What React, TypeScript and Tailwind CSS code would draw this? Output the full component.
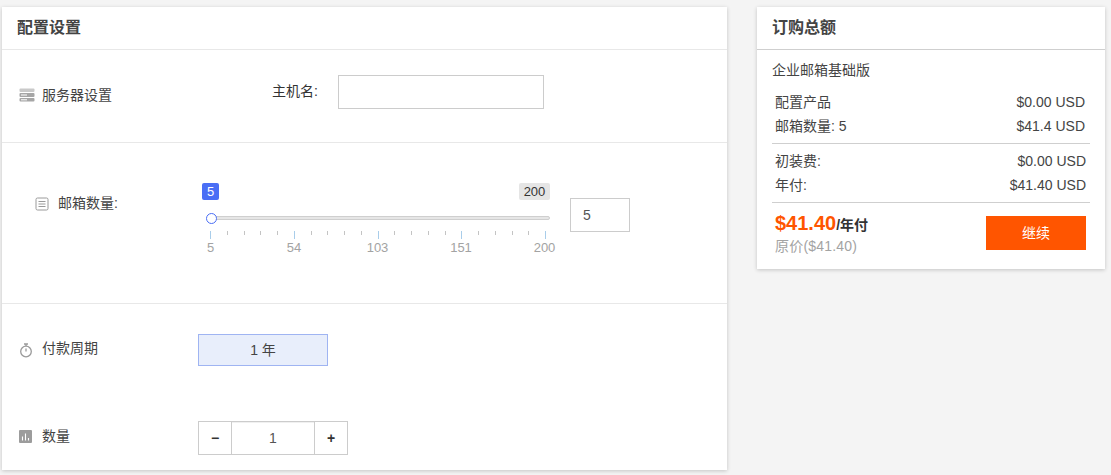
import React from 'react';

const font = { fontFamily: '"Liberation Sans", "Noto Sans CJK SC", sans-serif' };

const ServerIcon = () => (
  <svg width="16" height="14" viewBox="0 0 16 14" className="shrink-0">
    <rect x="0.5" y="0.5" width="15" height="3.5" rx="1" fill="#c9c9c9" />
    <rect x="0.5" y="5" width="15" height="4" rx="1" fill="#a6a6a6" />
    <rect x="0.5" y="10" width="15" height="3.5" rx="1" fill="#a6a6a6" />
    <rect x="2" y="6.5" width="6" height="1" fill="#fff" />
    <rect x="2" y="11.3" width="6" height="1" fill="#fff" />
  </svg>
);

const ListIcon = () => (
  <svg width="14" height="14" viewBox="0 0 14 14" fill="none" stroke="#9a9a9a" className="shrink-0">
    <rect x="1" y="1" width="12" height="12" rx="1.5" />
    <path d="M3.5 4.5h7M3.5 7h7M3.5 9.5h7" />
  </svg>
);

const TimerIcon = () => (
  <svg width="14" height="15" viewBox="0 0 14 15" fill="none" stroke="#9a9a9a" strokeWidth="1.3" className="shrink-0">
    <circle cx="7" cy="8.5" r="5.3" />
    <path d="M5 1h4M7 1v2M7 8.5V5.5" />
  </svg>
);

const ChartIcon = () => (
  <svg width="13" height="13" viewBox="0 0 13 13" className="shrink-0">
    <rect width="13" height="13" rx="1" fill="#9c9c9c" />
    <path d="M3.5 6.5v4M6.5 3.5v7M9.5 8v2.5" stroke="#fff" strokeWidth="1.1" />
  </svg>
);

const ticks = Array.from({ length: 21 }, (_, i) => i);
const marks = ['5', '54', '103', '151', '200'];

const Slider = () => (
  <div className="w-[348px] ml-[4px]">
    <div className="flex justify-between h-[17px] w-[348px]">
      <span className="w-[17px] h-[17px] rounded-[2px] bg-[#4a6ef5] text-white text-[13px] leading-[17px] text-center">5</span>
      <span className="w-[31px] h-[17px] rounded-[2px] bg-[#e5e5e5] text-[#333] text-[13px] leading-[17px] text-center">200</span>
    </div>
    <div className="relative mt-[16px] ml-[7px] w-[341px] h-[4px] rounded-full bg-[#e6e6e6] border border-[#cfcfcf]">
      <span className="absolute -left-[4.5px] -top-[4.5px] w-[11px] h-[11px] rounded-full bg-white border-[1.5px] border-[#4a6ef5]" />
    </div>
    <div className="flex justify-between ml-[8px] w-[336px] mt-[11px] items-start">
      {ticks.map((t) => (
        <span
          key={t}
          className={t % 5 === 0 ? 'w-px h-[8px] bg-[#a9cdea]' : 'w-px h-[4px] bg-[#c4c4c4]'}
        />
      ))}
    </div>
    <div className="flex justify-between ml-[8px] w-[335px] mt-px text-[13px] leading-[16px] text-[#a3a3a3]">
      {marks.map((m) => (
        <span key={m} className="w-px flex justify-center">
          {m}
        </span>
      ))}
    </div>
  </div>
);

const Row = ({ left, right }: { left: string; right: string }) => (
  <div className="flex justify-between h-6 items-center text-[14px] text-[#444]">
    <span>{left}</span>
    <span>{right}</span>
  </div>
);

export default function App() {
  return (
    <div style={font} className="w-[1111px] h-[475px] overflow-hidden bg-[#f4f4f4] flex items-start pt-[7px] pl-[2px]">
      {/* config card */}
      <div className="w-[725px] h-[463px] bg-white shadow-[0_1px_4px_rgba(0,0,0,0.2)] shrink-0">
        <div className="h-[43px] border-b border-[#e8e8e8] pl-[15px] flex items-center">
          <h2 className="text-[16px] font-bold text-[#444] leading-none">配置设置</h2>
        </div>
        <div className="h-[93px] border-b border-[#e8e8e8] flex items-center">
          <div className="w-[270px] pl-[17px] flex items-center gap-[7px] -mt-[2px]">
            <ServerIcon />
            <span className="text-[14px] text-[#444]">服务器设置</span>
          </div>
          <span className="text-[14px] text-[#333] w-[66px] -mt-[10px]">主机名:</span>
          <div className="w-[206px] h-[34px] border border-[#ccc] -mt-[8px]" />
        </div>
        <div className="h-[161px] border-b border-[#e8e8e8] flex items-start">
          <div className="w-[196px] pl-[33px] pt-[50px] flex items-center gap-[9px]">
            <ListIcon />
            <span className="text-[14px] text-[#444]">邮箱数量:</span>
          </div>
          <div className="pt-[40px]">
            <Slider />
          </div>
          <div className="mt-[55px] ml-[20px] w-[60px] h-[34px] border border-[#ccc] pl-[12px] text-[14px] leading-[32px] text-[#555]">5</div>
        </div>
        <div className="h-[159px] pt-[30px]">
          <div className="flex items-center h-[32px]">
            <div className="w-[196px] pl-[17px] flex items-center gap-[9px]">
              <TimerIcon />
              <span className="text-[14px] text-[#444] -mt-[3px]">付款周期</span>
            </div>
            <div className="w-[130px] h-[32px] bg-[#e8eefb] border border-[#9fb4f2] text-[14px] text-[#444] flex items-center justify-center">1 年</div>
          </div>
          <div className="flex items-center h-[34px] mt-[55px]">
            <div className="w-[196px] pl-[17px] flex items-center gap-[10px] -mt-[4px]">
              <ChartIcon />
              <span className="text-[14px] text-[#444]">数量</span>
            </div>
            <div className="w-[150px] h-[34px] border border-[#ccc] flex text-[#333]">
              <span className="w-[33px] border-r border-[#ccc] flex items-center justify-center font-bold text-[14px]">−</span>
              <span className="flex-1 border-t border-[#f0f0f0] flex items-center justify-center text-[14px] text-[#555]">1</span>
              <span className="w-[33px] border-l border-[#ccc] flex items-center justify-center font-bold text-[14px]">+</span>
            </div>
          </div>
        </div>
      </div>

      {/* order summary */}
      <div className="ml-[30px] w-[348px] h-[262px] bg-white shadow-[0_1px_4px_rgba(0,0,0,0.2)] shrink-0">
        <div className="h-[43px] border-b border-[#cfcfcf] pl-[15px] flex items-center">
          <h2 className="text-[16px] font-bold text-[#444] leading-none">订购总额</h2>
        </div>
        <div className="px-[15px]">
          <div className="text-[14px] text-[#444] h-[40px] pt-[11px] leading-[18px]">企业邮箱基础版</div>
          <div className="pl-[3px] pr-[5px] pb-[5px] border-b border-[#cfcfcf]">
            <Row left="配置产品" right="$0.00 USD" />
            <Row left="邮箱数量: 5" right="$41.4 USD" />
          </div>
          <div className="pl-[3px] pr-[4px] py-[5px] border-b border-[#cfcfcf]">
            <Row left="初装费:" right="$0.00 USD" />
            <Row left="年付:" right="$41.40 USD" />
          </div>
          <div className="flex justify-between pt-[7px] pl-[3px] pr-[4px]">
            <div>
              <div className="leading-[26px]">
                <span className="text-[20px] font-bold text-[#ff5500]">$41.40</span>
                <span className="text-[14px] font-bold text-[#333]">/年付</span>
              </div>
              <div className="text-[14px] text-[#a3a3a3] leading-[17px] tracking-[0.2px]">原价($41.40)</div>
            </div>
            <div className="mt-[6px] w-[100px] h-[34px] bg-[#ff5500] text-white text-[14px] flex items-center justify-center">继续</div>
          </div>
        </div>
      </div>
    </div>
  );
}
